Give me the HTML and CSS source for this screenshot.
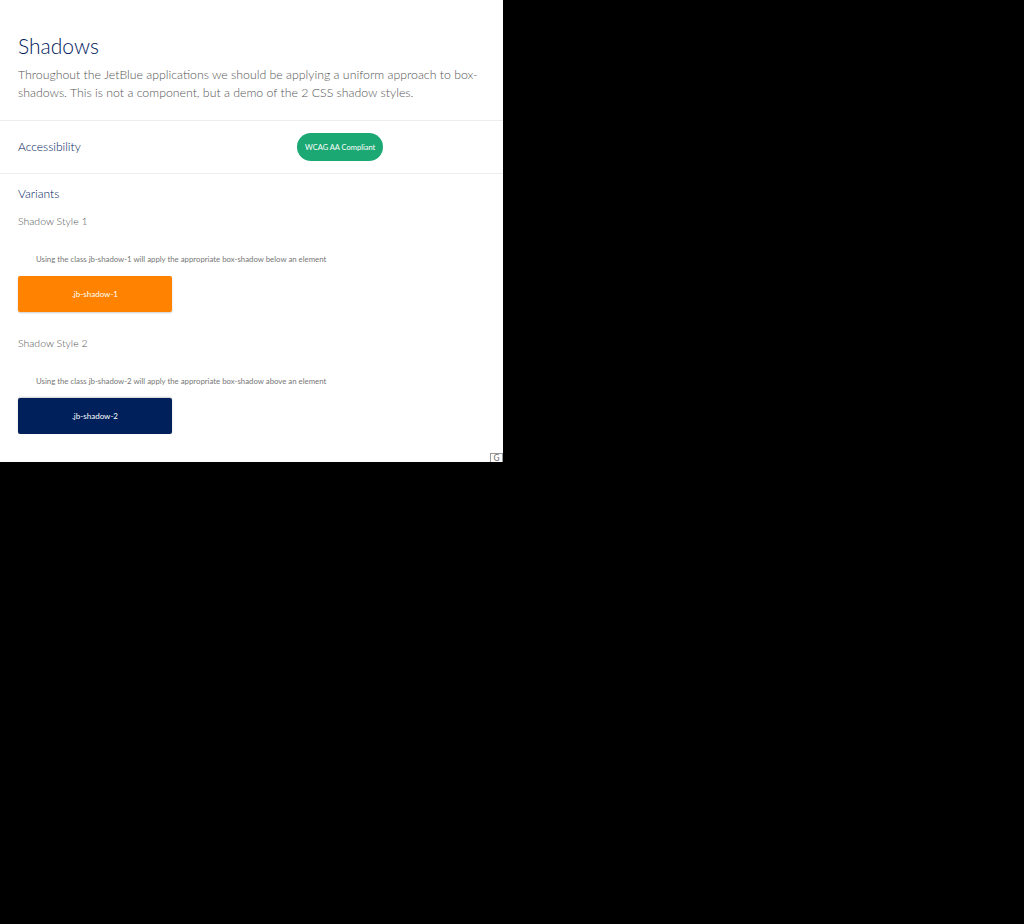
FILE: index.html
```html
<!DOCTYPE html>
<html lang="en">
<head>
<meta charset="utf-8">
<title>Shadows</title>
<link rel="stylesheet" href="styles.css">
</head>
<body>
<div class="frame">
  <header class="intro">
    <h1 class="title">Shadows</h1>
    <p class="lead">Throughout the JetBlue applications we should be applying a uniform approach to box-shadows. This is not a component, but a demo of the 2 CSS shadow styles.</p>
  </header>
  <section class="a11y">
    <h2 class="a11y-label">Accessibility</h2>
    <div class="a11y-badge-cell"><span class="badge">WCAG AA Compliant</span></div>
  </section>
  <section class="variants">
    <h2 class="variants-title">Variants</h2>
    <div class="variant">
      <h3 class="variant-title">Shadow Style 1</h3>
      <p class="variant-desc">Using the class jb-shadow-1 will apply the appropriate box-shadow below an element</p>
      <div class="demo demo-1">.jb-shadow-1</div>
    </div>
    <div class="variant">
      <h3 class="variant-title">Shadow Style 2</h3>
      <p class="variant-desc">Using the class jb-shadow-2 will apply the appropriate box-shadow above an element</p>
      <div class="demo demo-2">.jb-shadow-2</div>
    </div>
  </section>
  <span class="corner-g">G</span>
</div>
</body>
</html>
```
FILE: styles.css
```css
html, body {
  margin: 0;
  padding: 0;
  background: #000;
}
body {
  font-family: Lato, "Open Sans", sans-serif;
}
.frame {
  position: relative;
  width: 503px;
  height: 462px;
  background: #fff;
  overflow: hidden;
}
.intro {
  padding: 31px 18px 18px;
  border-bottom: 1px solid #ededed;
}
.title {
  margin: 0;
  font-size: 21px;
  font-weight: 300;
  line-height: 30px;
  color: #00205b;
}
.lead {
  margin: 5px 0 0;
  font-size: 12.3px;
  font-weight: 300;
  line-height: 18px;
  color: #555;
}
.a11y {
  display: grid;
  grid-template-columns: 279px 1fr;
  align-items: center;
  padding: 12px 18px 12px;
  border-bottom: 1px solid #ededed;
}
.a11y-label {
  margin: 0 0 2px;
  font-size: 12px;
  font-weight: 300;
  color: #00205b;
}
.badge {
  display: inline-flex;
  align-items: center;
  justify-content: center;
  height: 28px;
  padding: 0 8px;
  border-radius: 14px;
  background: #1ca873;
  color: #fff;
  font-size: 7.5px;
}
.variants {
  padding: 11px 18px 0;
}
.variants-title {
  margin: 0;
  font-size: 12px;
  font-weight: 300;
  line-height: 18px;
  color: #00205b;
}
.variant-title {
  margin: 10px 0 0;
  font-size: 10.5px;
  font-weight: 300;
  line-height: 16px;
  color: #555;
}
.variant-desc {
  margin: 24px 0 0 18px;
  font-size: 7.8px;
  font-weight: 400;
  line-height: 12px;
  color: #777;
}
.demo {
  display: flex;
  align-items: center;
  justify-content: center;
  width: 154px;
  height: 36px;
  margin-top: 11px;
  border-radius: 2px;
  color: #fff;
  font-size: 8px;
  font-weight: 400;
}
.demo-1 {
  background: #ff8200;
  box-shadow: 0 1px 2px rgba(0, 0, 0, 0.2);
}
.demo-2 {
  background: #00205b;
  box-shadow: 0 -1px 2px rgba(0, 0, 0, 0.2);
}
.variant + .variant .variant-title {
  margin-top: 23px;
}
.corner-g {
  position: absolute;
  right: 0;
  bottom: 0;
  width: 11px;
  height: 8px;
  border: 1px solid #999;
  border-bottom: none;
  background: #fff;
  font-size: 8px;
  line-height: 10px;
  text-align: center;
  color: #666;
  font-family: "DejaVu Sans", sans-serif;
}
```
